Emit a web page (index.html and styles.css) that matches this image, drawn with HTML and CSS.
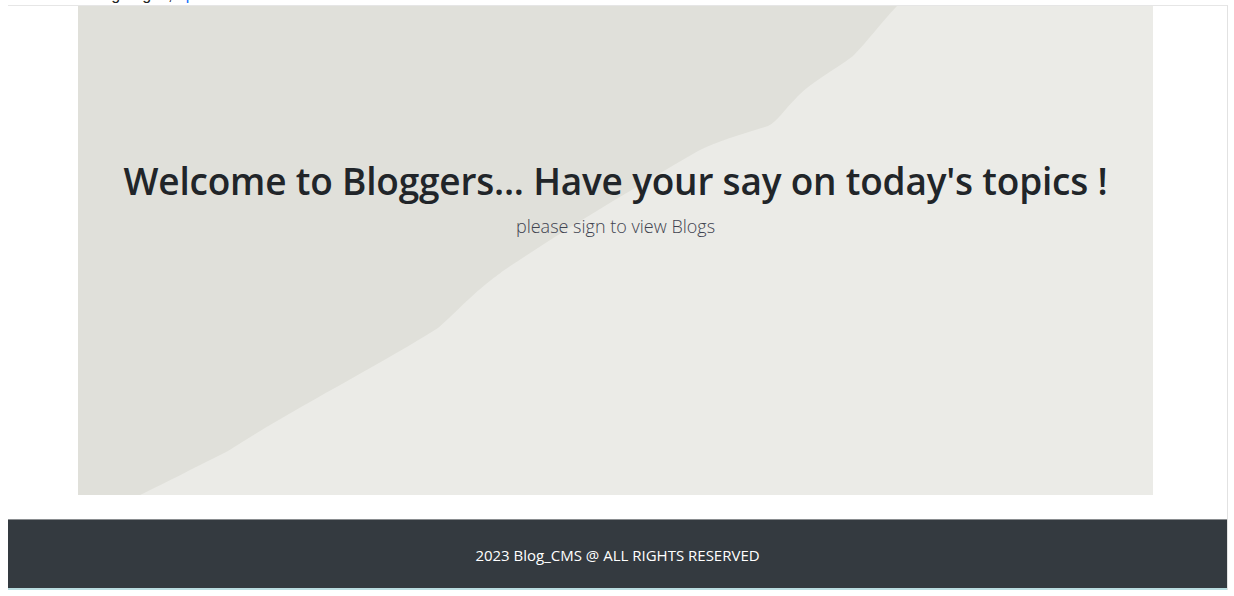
FILE: index.html
```html
<!DOCTYPE html>
<html lang="en">
<head>
<meta charset="utf-8">
<title>Blog_CMS</title>
<link rel="stylesheet" href="styles.css">
</head>
<body>
  <div class="topnav">
    <span class="nav-text">Blog Log in,</span>
    <a class="nav-link" href="#">up</a>
  </div>
  <div class="frame">
    <section class="hero">
      <svg class="hero-bg" viewBox="0 0 1075 489" preserveAspectRatio="none" aria-hidden="true">
        <rect x="0" y="0" width="1075" height="489" fill="#ebebe7"/>
        <path d="M0 0 L819 0 C800 20 790 35 775 50 C755 65 735 75 720 90 C705 105 700 115 690 120 C665 128 640 135 620 145 C560 180 500 215 440 255 C400 280 380 305 360 322 C300 360 220 400 150 445 C110 465 85 478 62 489 L0 489 Z" fill="#e0e0da"/>
      </svg>
      <div class="hero-content">
        <h1 class="hero-title">Welcome to Bloggers... Have your say on today's topics !</h1>
        <p class="hero-lead">please sign to view Blogs</p>
      </div>
    </section>
    <footer class="footer">
      <p class="footer-text">2023 Blog_CMS @ ALL RIGHTS RESERVED</p>
    </footer>
  </div>
</body>
</html>
```
FILE: styles.css
```css
html, body {
  margin: 0;
  padding: 0;
  background: #ffffff;
  overflow: hidden;
}

body {
  font-family: "Open Sans", "Noto Sans", sans-serif;
  color: #212529;
}

.topnav {
  margin-top: -15px;
  height: 20px;
  line-height: 20px;
  padding-left: 88px;
  font-family: "Liberation Sans", Arial, sans-serif;
  font-size: 16px;
  white-space: nowrap;
}

.nav-text {
  color: #222;
}

.nav-link {
  color: #0d6efd;
  text-decoration: none;
}

.frame {
  margin-left: 8px;
  width: 1219px;
  border-top: 1px solid #e6e6e6;
  border-right: 1px solid #e2e2e2;
}

.hero {
  position: relative;
  margin-left: 70px;
  width: 1075px;
  height: 489px;
  overflow: hidden;
}

.hero-bg {
  position: absolute;
  inset: 0;
  width: 100%;
  height: 100%;
  display: block;
}

.hero-content {
  position: relative;
  display: flex;
  flex-direction: column;
  align-items: center;
  padding-top: 153px;
}

.hero-title {
  margin: 0;
  font-size: 37px;
  font-weight: 600;
  letter-spacing: -0.2px;
  line-height: 1.2;
  white-space: nowrap;
}

.hero-lead {
  margin: 11px 0 0;
  font-size: 18px;
  font-weight: 300;
  color: #3f4350;
}

.footer {
  margin-top: 24px;
  height: 66px;
  background: #343a40;
  border-top: 1px solid #8a8d90;
  border-bottom: 2px solid #b9dde0;
  display: flex;
  align-items: center;
  justify-content: center;
  padding-top: 2px;
  box-sizing: content-box;
}

.footer-text {
  margin: 0;
  color: #ffffff;
  font-size: 15px;
}
```
